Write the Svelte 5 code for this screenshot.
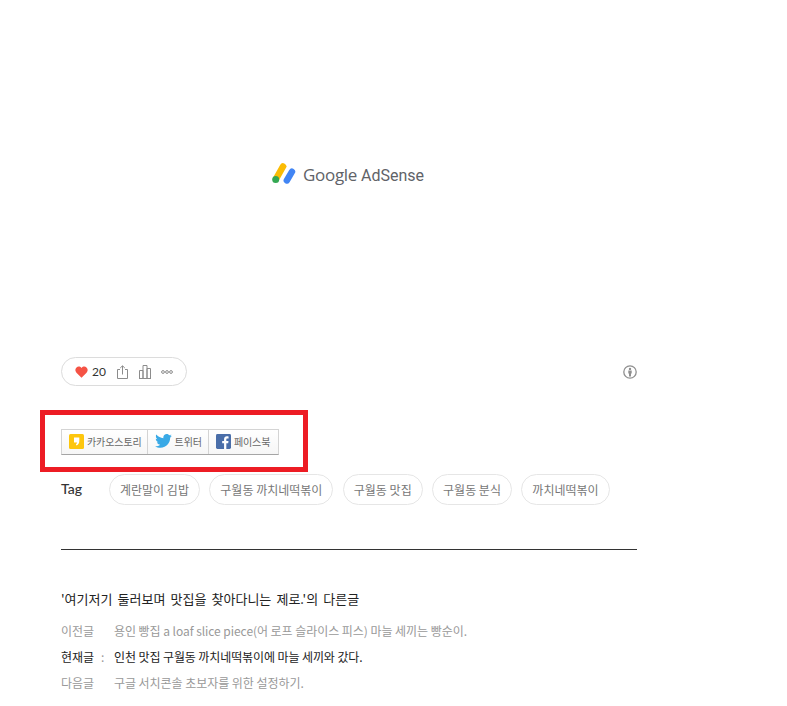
<script>
  const tags = ["계란말이 김밥", "구월동 까치네떡볶이", "구월동 맛집", "구월동 분식", "까치네떡볶이"];
  const posts = [
    { label: "이전글", mark: "", title: "용인 빵집 a loaf slice piece(어 로프 슬라이스 피스) 마늘 세끼는 빵순이." },
    { label: "현재글", mark: ":", title: "인천 맛집 구월동 까치네떡볶이에 마늘 세끼와 갔다.", current: true },
    { label: "다음글", mark: "", title: "구글 서치콘솔 초보자를 위한 설정하기." },
  ];
</script>

<main class="post">
  <div class="ad">
    <svg class="ad-mark" width="24" height="22" viewBox="0 0 24 22" fill="none" stroke-linecap="round">
      <path d="M11 3.500 4.500 15" stroke="#fbbc04" stroke-width="6.600" />
      <path d="M20 8.700 14.800 17.500" stroke="#4285f4" stroke-width="6.400" />
      <circle cx="3.700" cy="16.500" r="3.500" fill="#34a853" />
    </svg>
    <span class="ad-text"><span>Google</span> AdSense</span>
  </div>

  <div class="actions">
    <div class="pill">
      <svg width="13" height="12" viewBox="0 0 14 13"><path d="M7 12.600 1.500 7.200C-.2 5.500 0 2.900 1.600 1.500 3.200.2 5.600.4 7 2.200 8.400.4 10.800.2 12.400 1.500c1.600 1.400 1.800 4 .1 5.700z" fill="#f55345" /></svg>
      <span class="count">20</span>
      <svg class="share" width="11" height="14" viewBox="0 0 11 14" fill="none" stroke="#8c8c8c"><path d="M3 4.500H.5v9h10v-9H8M5.500 9.500V1M3.200 3 5.500.8 7.800 3" /></svg>
      <svg class="stats" width="12" height="14" viewBox="0 0 12 14" fill="none" stroke="#8c8c8c"><path d="M.5 13.500v-8h3.500v8M4 13.500V.5h4v13M8 13.500v-10h3.500v10M0 13.500h12" /></svg>
      <svg class="more" width="12" height="4" viewBox="0 0 12 4" fill="none" stroke="#8c8c8c"><circle cx="2" cy="2" r="1.400" /><circle cx="6" cy="2" r="1.400" /><circle cx="10" cy="2" r="1.400" /></svg>
    </div>
    <svg width="14" height="14" viewBox="0 0 14 14"><circle cx="7" cy="7" r="6.200" fill="none" stroke="#8f8f8f" stroke-width="1.300" /><circle cx="7" cy="3.900" r="1.200" fill="#8f8f8f" /><path d="M5.300 5.600h3.400v3H8v3H6v-3h-.7z" fill="#8f8f8f" /></svg>
  </div>

  <div class="share-frame">
    <div class="share-box">
      <button type="button">
        <svg width="15" height="15" viewBox="0 0 15 15"><rect width="15" height="15" rx="1.500" fill="#fdc60d" /><path d="M5 3.500h5.300V7c0 2.300-1 3.800-2.800 4.500l-.6-1.200c.7-.4 1.100-1 1.200-1.700H5z" fill="#fff" /></svg>
        <span>카카오스토리</span>
      </button>
      <button type="button">
        <svg width="17" height="14" viewBox="0 0 19 16"><path d="M19 2c-.7.3-1.400.5-2.200.6.800-.5 1.400-1.200 1.700-2.100-.8.400-1.600.8-2.500.9C15.300.6 14.300 0 13.200 0c-2.200 0-3.900 1.800-3.900 3.900 0 .3 0 .6.100.9C6.100 4.700 3.300 3.100 1.300.7.900 1.300.8 2 .8 2.700c0 1.400.7 2.600 1.700 3.300-.6 0-1.200-.2-1.800-.5 0 1.900 1.400 3.500 3.100 3.900-.6.200-1.200.2-1.800.1.500 1.600 2 2.700 3.700 2.700C4 13.400 2 14.200 0 14c1.700 1.100 3.800 1.800 6 1.800 7.200 0 11.100-6 11.100-11.100v-.5C17.800 3.600 18.500 2.900 19 2z" fill="#39a9e6" /></svg>
        <span>트위터</span>
      </button>
      <button type="button">
        <svg width="15" height="15" viewBox="0 0 16 16"><rect width="16" height="16" rx="1.500" fill="#4a6ea9" /><path d="M11 16V9.800h2l.3-2.400H11V5.900c0-.7.200-1.200 1.200-1.200h1.200V2.600c-.2 0-.9-.1-1.800-.1-1.800 0-3 1.100-3 3.100v1.800h-2v2.400h2V16z" fill="#fff" /></svg>
        <span>페이스북</span>
      </button>
    </div>
  </div>

  <div class="tags">
    <strong>Tag</strong>
    <div class="chips">
      {#each tags as tag}
        <span class="chip">{tag}</span>
      {/each}
    </div>
  </div>

  <section class="others">
    <h3>'여기저기 둘러보며 맛집을 찾아다니는 제로.'의 다른글</h3>
    <ul>
      {#each posts as post}
        <li class:current={post.current}>
          <span class="label">{post.label}</span>
          <span class="mark">{post.mark}</span>
          <span>{post.title}</span>
        </li>
      {/each}
    </ul>
  </section>
</main>

<style>
  :global(body) {
    background: #fff;
  }

  .post {
    width: 576px;
    padding: 0 0 0 61px;
    font-family: "Noto Sans CJK KR", "Noto Sans", sans-serif;
  }

  .ad {
    height: 357px;
    box-sizing: border-box;
    padding: 163px 0 0 211px;
    display: flex;
    align-items: flex-start;
    gap: 7px;
  }

  .ad-text {
    font-family: Roboto, "Open Sans", sans-serif;
    font-size: 16px;
    line-height: 24px;
    color: #5f6368;
  }

  .ad-text span {
    font-family: "Open Sans", Roboto, sans-serif;
    font-size: 17px;
    font-weight: 500;
    letter-spacing: -0.3px;
  }

  .actions {
    display: flex;
    align-items: center;
    justify-content: space-between;
  }

  .pill {
    width: 126px;
    height: 29px;
    box-sizing: border-box;
    border: 1px solid #dcdcdc;
    border-radius: 15px;
    padding-left: 13px;
    display: flex;
    align-items: center;
  }

  .count {
    font-family: Lato, "Noto Sans", sans-serif;
    font-size: 12px;
    color: #333;
    margin-left: 4px;
  }

  .share {
    margin-left: 11px;
  }

  .stats {
    margin-left: 11px;
  }

  .more {
    margin-left: 10px;
  }

  .share-frame {
    width: 268px;
    height: 62px;
    box-sizing: border-box;
    margin: 24px 0 0 -21px;
    border: 5px solid #ed1c24;
    padding: 14px 0 0 16px;
  }

  .share-box {
    display: inline-flex;
    height: 26px;
    box-sizing: border-box;
    border: 1px solid #d4d4d4;
    border-bottom: 1px solid #a5a5a5;
    background: linear-gradient(#fff, #f6f6f6);
  }

  button {
    display: flex;
    align-items: center;
    gap: 3px;
    padding: 0 6px 2px 7px;
    border: 0;
    border-left: 1px solid #d4d4d4;
    background: none;
    font-family: inherit;
    font-size: 10px;
    letter-spacing: -0.1px;
    color: #666;
    white-space: nowrap;
  }

  button:first-child {
    border-left: 0;
    padding-right: 5px;
  }

  button:last-child {
    padding-right: 8px;
  }

  .tags {
    display: flex;
    align-items: center;
    margin-top: 2px;
  }

  .tags strong {
    width: 48px;
    margin-top: -2px;
    font-family: Lato, "Noto Sans", sans-serif;
    font-weight: 500;
    font-size: 14px;
    color: #333;
    flex: none;
  }

  .chips {
    display: flex;
    gap: 9.4px;
  }

  .chip {
    height: 31px;
    box-sizing: border-box;
    border: 1px solid #e6e6e6;
    border-radius: 16px;
    padding: 0 10px;
    display: flex;
    align-items: center;
    font-size: 12px;
    color: #777;
    white-space: nowrap;
  }

  .others {
    margin-top: 44px;
    border-top: 1px solid #333;
    padding-top: 40px;
  }

  h3 {
    margin: 0;
    font-size: 13px;
    line-height: 18px;
    font-weight: 400;
    word-spacing: 2.2px;
    color: #222;
  }

  ul {
    list-style: none;
    margin: 9px 0 0;
    padding: 0;
  }

  li {
    display: flex;
    height: 26px;
    align-items: center;
    font-size: 12px;
    letter-spacing: -0.05px;
    color: #999;
    white-space: nowrap;
  }

  li.current {
    color: #222;
    letter-spacing: -0.1px;
  }

  .label {
    width: 40px;
  }

  .mark {
    width: 13px;
    color: #999;
  }
</style>
